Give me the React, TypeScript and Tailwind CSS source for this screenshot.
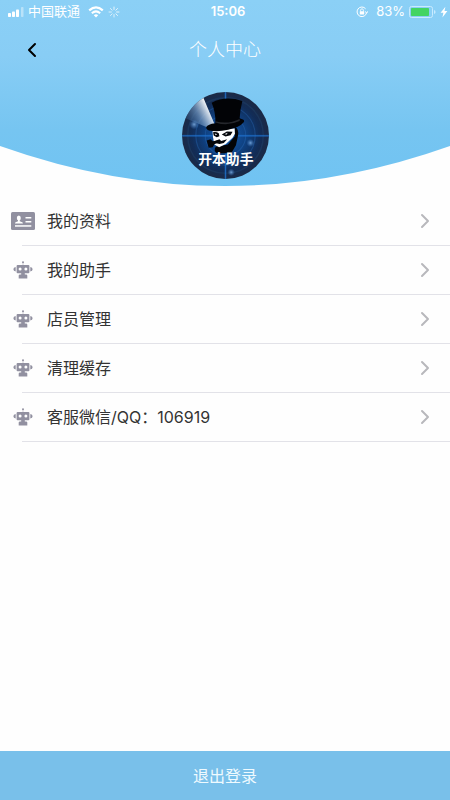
import { ChevronLeft, ChevronRight } from "lucide-react";

const MENU_ITEMS = [
  { label: "我的资料", icon: "card" },
  { label: "我的助手", icon: "robot" },
  { label: "店员管理", icon: "robot" },
  { label: "清理缓存", icon: "robot" },
  { label: "客服微信/QQ：106919", icon: "robot" },
];

function CardIcon() {
  return (
    <svg viewBox="0 0 24 18" className="h-[18px] w-6" aria-hidden="true">
      <rect width="24" height="18" rx="1.5" fill="#9190a0" />
      <g fill="#fff">
        <ellipse cx="7.8" cy="6" rx="2" ry="2.5" />
        <path d="M7 8h1.7v1.2l2.6 1q.6.4.6 1.3H4q0-1 .6-1.3L7 9.2z" />
        <rect x="14.5" y="5" width="5.8" height="1.5" />
        <rect x="14.5" y="9" width="5.8" height="1.5" />
        <rect x="4" y="13.2" width="16.3" height="1.5" />
      </g>
    </svg>
  );
}

function RobotIcon() {
  return (
    <svg viewBox="0 0 20 18" className="h-[18px] w-5" aria-hidden="true">
      <g fill="#9190a0">
        <circle cx="10" cy="1.2" r="1" />
        <rect x="9.6" y="2" width=".8" height="2.2" opacity=".5" />
        <path
          fillRule="evenodd"
          d="M4.6 4h10.8q1 0 1 1v6.2q0 1-1 1H4.6q-1 0-1-1V5q0-1 1-1zM7.1 6.4a1.5 1.5 0 1 0 0 3 1.5 1.5 0 0 0 0-3zm5.8 0a1.5 1.5 0 1 0 0 3 1.5 1.5 0 0 0 0-3z"
        />
        <path d="M2.7 6v4.4Q.4 10 .4 8.2T2.7 6zM17.3 6v4.4q2.3-.4 2.3-2.2T17.3 6z" />
        <path d="M8.2 12h3.6v1.4H13q1.3 0 1.3 1.2v2.8H5.7v-2.8q0-1.2 1.3-1.2h1.2z" />
      </g>
    </svg>
  );
}

function StatusBar() {
  return (
    <div className="grid h-6 grid-cols-[1fr_auto_1fr] items-center pl-2 pr-0.5 text-[13px] text-white">
      <div className="flex items-center">
        <svg viewBox="0 0 16 10" className="h-[10px] w-4" fill="#fff" aria-hidden="true">
          <rect x="0" y="6" width="3" height="4" rx=".8" />
          <rect x="4" y="4.5" width="3" height="5.5" rx=".8" />
          <rect x="8" y="2.5" width="3" height="7.5" rx=".8" />
          <rect x="13" y="0" width="2.5" height="10" rx=".8" opacity=".4" />
        </svg>
        <span className="ml-1">中国联通</span>
        <svg viewBox="0 0 16 12" className="ml-2 h-3 w-4" fill="none" stroke="#fff" aria-hidden="true">
          <path d="M1.2 4.4Q8-1.6 14.8 4.4" strokeWidth="2.2" />
          <path d="M3.8 7.2Q8 3.6 12.2 7.2" strokeWidth="2" />
          <path d="M5.8 9.2 8 11.4l2.2-2.2Q8 7.4 5.8 9.2z" fill="#fff" stroke="none" />
        </svg>
        <svg viewBox="0 0 12 12" className="ml-1 h-3 w-3" stroke="#fff" strokeLinecap="round" aria-hidden="true">
          <path d="M6 1v2.5M9.5 2.5 7.9 4.2M11 6H8.6M9.5 9.5 7.9 7.8" opacity=".8" />
          <path d="M6 11V8.5M2.5 9.5l1.6-1.7M1 6h2.4M2.5 2.5l1.6 1.7" opacity=".7" />
        </svg>
      </div>
      <span className="font-semibold">15:06</span>
      <div className="flex items-center justify-end">
        <svg viewBox="0 0 12 12" className="h-3 w-3" fill="none" stroke="#fff" aria-hidden="true">
          <path d="M10.6 6.6A4.8 4.8 0 1 1 9.6 2.8" />
          <path d="m8.9 5.4 1.8 1.6L12 5.2" />
          <path d="M4.6 5.5V4.2a1.4 1.4 0 0 1 2.8 0v1.3" strokeWidth=".8" />
          <rect x="3.8" y="5.3" width="4.4" height="3.2" rx=".4" fill="#fff" stroke="none" />
        </svg>
        <span className="ml-2">83%</span>
        <svg viewBox="0 0 27 12" className="ml-1 h-3 w-[27px]" aria-hidden="true">
          <rect x=".5" y=".5" width="23" height="11" rx="2" fill="none" stroke="#c9ebff" />
          <rect x="2" y="2" width="18" height="8" rx=".8" fill="#43d463" />
          <path d="M25 4q1.6.5 1.6 2T25 8z" fill="#c9ebff" />
        </svg>
        <svg viewBox="0 0 8 12" className="ml-1 h-3 w-2" fill="#fff" aria-hidden="true">
          <path d="M5.4.8.6 6.8h2.8L2.4 11.4 7.4 5H4.5z" />
        </svg>
      </div>
    </div>
  );
}

function Avatar() {
  return (
    <svg viewBox="34 30 258 258" className="size-[87px]" role="img" aria-label="开本助手">
      <defs>
        <radialGradient id="night" cx=".5" cy=".5" r=".5">
          <stop offset="0" stopColor="#1760b4" />
          <stop offset=".5" stopColor="#12417f" />
          <stop offset=".78" stopColor="#142f59" />
          <stop offset="1" stopColor="#1e2b46" />
        </radialGradient>
        <linearGradient id="beam" gradientUnits="userSpaceOnUse" x1="50" y1="120" x2="118" y2="84">
          <stop offset="0" stopColor="#39679c" stopOpacity=".25" />
          <stop offset=".5" stopColor="#7298c2" stopOpacity=".7" />
          <stop offset="1" stopColor="#fff" />
        </linearGradient>
        <radialGradient id="glow">
          <stop offset="0" stopColor="#86b7ec" stopOpacity=".8" />
          <stop offset="1" stopColor="#3f82cf" stopOpacity="0" />
        </radialGradient>
        <clipPath id="disc">
          <circle cx="163" cy="159" r="129" />
        </clipPath>
      </defs>
      <g clipPath="url(#disc)">
        <rect x="34" y="30" width="258" height="258" fill="url(#night)" />
        <g fill="none" stroke="#2c6dbb" opacity=".4">
          <circle cx="163" cy="159" r="60" strokeWidth="3" />
          <circle cx="163" cy="159" r="88" strokeWidth="3" />
          <circle cx="163" cy="159" r="112" strokeWidth="4" stroke="#25486f" />
        </g>
        <path d="M34 160h258M163 30v258" stroke="#1b6fce" strokeWidth="7" opacity=".3" />
        <path d="M34 160h258M163 30v258" stroke="#2176d2" strokeWidth="3" opacity=".7" />
        <path d="M140 148 97 46Q58 66 44 108z" fill="url(#beam)" />
        <circle cx="70" cy="126" r="15" fill="url(#glow)" />
        <circle cx="237" cy="181" r="12" fill="url(#glow)" />
        <circle cx="180" cy="268" r="11" fill="url(#glow)" />
      </g>
      {/* collar and shoulders */}
      <path d="M190 132q14 8 10 28l-6 28-14 24h-42q-12-8-4-20l36-6 20-24z" fill="#030407" />
      {/* face */}
      <path d="M124 138h66l1 16-7 12-20 18-20 10-14-8-4-22z" fill="#fff" />
      <path d="M126 149q10-2 17 3l2 9-8 3-9-5zM152 156l15-9 17 1-6 10-15 4z" fill="#05070b" />
      <path d="m160 155 9-4-2 5zM131 153l7 2-4 3z" fill="#fff" />
      <path d="m132 175 13-5 5 5 18-5-10 11-13 3-9-2z" fill="#05070b" />
      {/* pipe */}
      <path d="m107 174 12-4 6 6 17-3 2 6-14 6-5 9-12 1z" fill="#05070b" />
      {/* top hat */}
      <path
        d="M122 62q42-22 91-5-7 27-8 51l8 3q8 3 4 9-12 15-46 22-32 7-57 2-10-3-8-10 4-8 27-11 1-34-11-61z"
        fill="#020306"
      />
      <path d="M133 117q38 10 72-7v6q-35 16-70 5z" fill="#25272c" />
      <text
        x="164"
        y="244"
        textAnchor="middle"
        fontSize="41"
        fontWeight="700"
        fill="#fff"
        fontFamily="'Noto Sans CJK SC', sans-serif"
      >
        开本助手
      </text>
    </svg>
  );
}

export default function App() {
  return (
    <div className="flex min-h-screen flex-col bg-[#fefefe] font-['Inter','Noto_Sans_CJK_SC',sans-serif] text-[#333]">
      <header className="relative isolate h-[186px]">
        <svg
          viewBox="0 0 450 186"
          preserveAspectRatio="none"
          className="absolute inset-0 -z-10 h-full w-full"
          aria-hidden="true"
        >
          <defs>
            <linearGradient id="sky" x1="0" y1="0" x2="0" y2="1">
              <stop offset="0" stopColor="#8bd0f6" />
              <stop offset=".3" stopColor="#88cdf5" />
              <stop offset=".7" stopColor="#76c5f1" />
              <stop offset="1" stopColor="#70c3f2" />
            </linearGradient>
          </defs>
          <path d="M0 0H450V146Q225 226 0 146z" fill="url(#sky)" />
        </svg>
        <StatusBar />
        <div className="grid h-[52px] grid-cols-[64px_1fr_64px] items-center">
          <button type="button" aria-label="返回" className="flex h-full items-center justify-center">
            <ChevronLeft className="size-6 text-black" strokeWidth={2} />
          </button>
          <h1 className="text-center text-lg font-light text-white">个人中心</h1>
        </div>
        <div className="mt-4 flex justify-center">
          <Avatar />
        </div>
      </header>

      <ul className="mt-[11px] flex-1">
        {MENU_ITEMS.map((item) => (
          <li key={item.label} className="relative">
            <button type="button" className="flex h-[49px] w-full items-center pb-0.5 pl-[11px] text-left">
              <span className="flex w-6 justify-center">
                {item.icon === "card" ? <CardIcon /> : <RobotIcon />}
              </span>
              <span className="ml-3 flex-1 text-base">{item.label}</span>
              <ChevronRight className="mr-[13px] size-6 text-[#b8b8bc]" strokeWidth={2} />
            </button>
            <div className="absolute right-0 bottom-0 left-[22px] h-px bg-[#e2e2e8]" />
          </li>
        ))}
      </ul>

      <button type="button" className="h-[49px] w-full bg-[#79c0ea] text-base text-[#effaff]">
        退出登录
      </button>
    </div>
  );
}
